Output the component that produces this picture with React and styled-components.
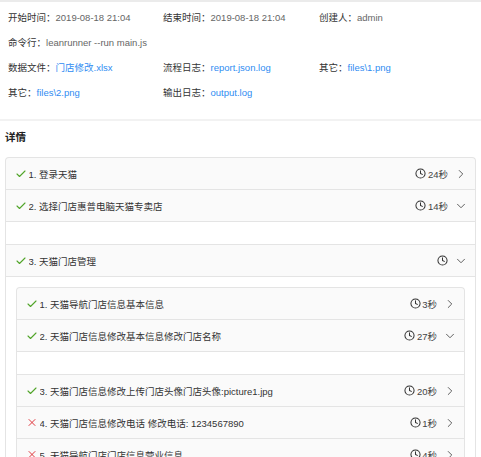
import React from 'react';
import styled, { createGlobalStyle } from 'styled-components';
import { Check, X, Clock, ChevronRight, ChevronDown } from 'lucide-react';

const GlobalStyle = createGlobalStyle`
  html, body {
    margin: 0;
    padding: 0;
    background: #fff;
  }
  body {
    font-family: "Liberation Sans", "Noto Sans CJK SC", sans-serif;
    color: #333;
  }
`;

const info = [
  [
    { label: '开始时间', value: '2019-08-18 21:04' },
    { label: '结束时间', value: '2019-08-18 21:04' },
    { label: '创建人', value: 'admin' }
  ],
  [{ label: '命令行', value: 'leanrunner --run main.js' }],
  [
    { label: '数据文件', value: '门店修改.xlsx', link: true },
    { label: '流程日志', value: 'report.json.log', link: true },
    { label: '其它', value: 'files\\1.png', link: true }
  ],
  [
    { label: '其它', value: 'files\\2.png', link: true },
    { label: '输出日志', value: 'output.log', link: true }
  ]
];

const subSteps = [
  { title: '1. 天猫导航门店信息基本信息', time: '3秒', ok: true },
  { title: '2. 天猫门店信息修改基本信息修改门店名称', time: '27秒', ok: true, open: true },
  { title: '3. 天猫门店信息修改上传门店头像门店头像:picture1.jpg', time: '20秒', ok: true },
  { title: '4. 天猫门店信息修改电话 修改电话: 1234567890', time: '1秒', ok: false },
  { title: '5. 天猫导航门店门店信息营业信息', time: '4秒', ok: false }
];

const Header = ({ step }) => (
  <PanelHead>
    <Status>
      {step.ok ? (
        <Check size={12} strokeWidth={2.2} color="#52a52a" />
      ) : (
        <X size={13} strokeWidth={2} color="#e0383e" />
      )}
    </Status>
    <Title>{step.title}</Title>
    <Time>
      <Clock size={11} strokeWidth={2.2} color="#333" />
      {step.time && <span>{step.time}</span>}
    </Time>
    <Arrow>
      {step.open ? (
        <ChevronDown size={14} strokeWidth={1.6} color="#555" />
      ) : (
        <ChevronRight size={14} strokeWidth={1.6} color="#555" />
      )}
    </Arrow>
  </PanelHead>
);

const Step = ({ step, children }) => (
  <Panel>
    <Header step={step} />
    {step.open && <PanelBody $padded={!!children}>{children}</PanelBody>}
  </Panel>
);

export default function App() {
  return (
    <>
      <GlobalStyle />
      <InfoSection>
        {info.map((row, i) => (
          <InfoRow key={i}>
            {row.map((cell, j) => (
              <InfoCell key={j}>
                <Label>{cell.label}：</Label>
                <Value $link={cell.link}>{cell.value}</Value>
              </InfoCell>
            ))}
          </InfoRow>
        ))}
      </InfoSection>

      <SectionTitle>详情</SectionTitle>

      <Collapse>
        <Step step={{ title: '1. 登录天猫', time: '24秒', ok: true }} />
        <Step step={{ title: '2. 选择门店惠普电脑天猫专卖店', time: '14秒', ok: true, open: true }} />
        <Step step={{ title: '3. 天猫门店管理', time: '', ok: true, open: true }}>
          <Collapse $inner>
            {subSteps.map((s, i) => (
              <Step key={i} step={s} />
            ))}
          </Collapse>
        </Step>
      </Collapse>
    </>
  );
}

const InfoSection = styled.div`
  border-top: 2px solid #ebebeb;
  border-bottom: 2px solid #f2f2f2;
  padding: 2px 0 15px 8px;
`;

const InfoRow = styled.div`
  display: grid;
  grid-template-columns: 155px 156px 1fr;
  height: 25px;
  align-items: center;
`;

const InfoCell = styled.div`
  font-size: 9.5px;
  white-space: nowrap;
`;

const Label = styled.span`
  color: #333;
`;

const Value = styled.span`
  color: ${p => (p.$link ? '#2f8cf2' : '#666')};
`;

const SectionTitle = styled.div`
  font-size: 10.5px;
  font-weight: bold;
  color: #222;
  padding: 6px 5px 0;
  line-height: 20px;
  margin-bottom: 10px;
`;

const Collapse = styled.div`
  margin: ${p => (p.$inner ? '0' : '0 5px')};
  border: 1px solid #e4e4e4;
  border-bottom: none;
  border-radius: 4px;
  background: #fafafa;
`;

const Panel = styled.div`
  border-bottom: 1px solid #e4e4e4;
  &:last-child {
    border-radius: 0 0 4px 4px;
  }
`;

const PanelHead = styled.div`
  display: flex;
  align-items: center;
  height: 31px;
  padding: 0 7px 0 9px;
  font-size: 9.5px;
  color: #333;
`;

const Status = styled.span`
  display: flex;
  width: 12px;
  justify-content: center;
  margin-right: 1.5px;
`;

const Title = styled.span`
  flex: 1;
  white-space: nowrap;
  overflow: hidden;
`;

const Time = styled.span`
  display: flex;
  align-items: center;
  gap: 1.5px;
  color: #444;
  margin-right: 6px;
`;

const Arrow = styled.span`
  display: flex;
`;

const PanelBody = styled.div`
  background: #fff;
  border-top: 1px solid #e4e4e4;
  min-height: 22px;
  padding: ${p => (p.$padded ? '10px' : '0')};
`;
